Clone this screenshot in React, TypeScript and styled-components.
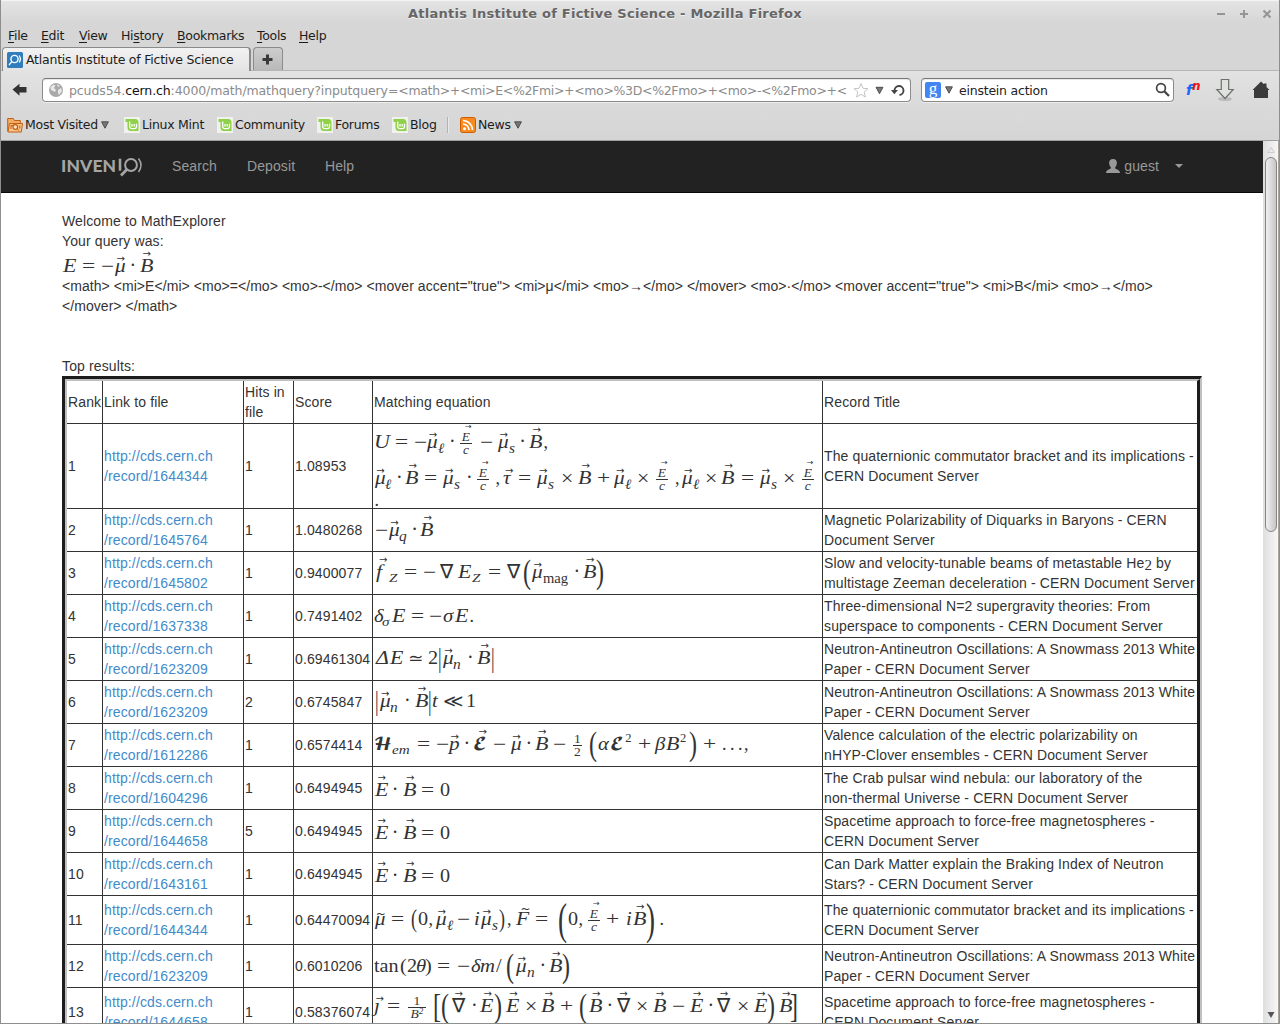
import React from "react";
import styled, { createGlobalStyle } from "styled-components";

const Global = createGlobalStyle`
  * { box-sizing: border-box; }
  body { margin: 0; background: #fff; overflow: hidden; }
`;

const ui = '"DejaVu Sans", sans-serif';
const sans = '"Liberation Sans", Arial, sans-serif';
const serif = '"Liberation Serif", "DejaVu Serif", serif';
const script = '"DejaVu Math TeX Gyre", "DejaVu Sans", serif';

/* ---------- window frame ---------- */

const Frame = styled.div`
  width: 1280px;
  height: 1024px;
  display: flex;
  flex-direction: column;
  overflow: hidden;
  border: 1px solid #8e8e8e;
  border-top: 0;
  background: #d6d6d6;
  font-family: ${ui};
  font-size: 12.5px;
  letter-spacing: -0.22px;
  color: #1c1c1c;
`;

const TitleBar = styled.header`
  height: 26px;
  flex: none;
  display: flex;
  align-items: center;
  justify-content: space-between;
  padding: 0 7px 0 407px;
  border-top: 1px solid #f4f4f4;
  background: linear-gradient(#e4e4e4, #d6d6d6 22px);
`;

const WindowTitle = styled.div`
  font-size: 13px;
  font-weight: bold;
  letter-spacing: 0.25px;
  color: #666;
  text-shadow: 0 1px 0 #f2f2f2;
  white-space: nowrap;
`;

const WindowButtons = styled.div`
  display: flex;
  gap: 13px;
`;

const MenuBar = styled.nav`
  height: 21px;
  flex: none;
  display: flex;
  align-items: center;
  padding: 0 0 2px 7px;
`;

const MenuItem = styled.span<{ $w: number }>`
  width: ${(p) => p.$w}px;
  white-space: nowrap;
  line-height: 18px;
  letter-spacing: -0.3px;
  u { text-underline-offset: 2px; text-decoration-thickness: 1px; }
`;

const TabStrip = styled.div`
  height: 24px;
  flex: none;
  display: flex;
  align-items: flex-end;
  gap: 2px;
  padding-left: 1px;
  border-bottom: 1px solid #b5b5b5;
`;

const Tab = styled.div`
  width: 249px;
  height: 24px;
  margin-bottom: -1px;
  display: flex;
  align-items: center;
  gap: 3px;
  padding: 0 4px;
  border: 1px solid #8b8b8b;
  border-width: 1px 2px 0 1px;
  border-radius: 4px 4px 0 0;
  background: linear-gradient(#f2f2f2, #e3e3e3);
  white-space: nowrap;
`;

const NewTab = styled.button`
  width: 30px;
  height: 23px;
  padding: 0 2px 0 0;
  display: flex;
  align-items: center;
  justify-content: center;
  border: 1px solid #8b8b8b;
  border-bottom: 0;
  border-radius: 4px 4px 0 0;
  background: linear-gradient(#cdcdcd, #b9b9b9);
`;

const NavBar = styled.div`
  height: 38px;
  flex: none;
  display: flex;
  align-items: center;
  padding-left: 11px;
  background: linear-gradient(#e2e2e2, #d9d9d9);
`;

const Field = styled.div<{ $w: number }>`
  width: ${(p) => p.$w}px;
  height: 24px;
  display: flex;
  align-items: center;
  border: 1px solid #8a8a8a;
  border-top-color: #777;
  border-radius: 4px;
  background: #fff;
  box-shadow: 0 1px 0 #eee, inset 0 1px 0 #e8e8e8;
`;

const UrlField = styled(Field)`
  margin-left: 14px;
  padding-left: 5px;
`;

const SearchField = styled(Field)`
  margin: 0 12px 0 10px;
  padding: 0 2px 0 3px;
`;

const Url = styled.div`
  flex: none;
  width: 778px;
  margin-left: 5px;
  overflow: hidden;
  white-space: nowrap;
  letter-spacing: -0.11px;
  color: #8b8b8b;
  b { font-weight: normal; color: #111; }
`;

const UrlQuery = styled.span`
  letter-spacing: -0.34px;
`;

const SearchText = styled.span`
  flex: 1;
  margin-left: 6px;
  color: #222;
`;

const GoogleMark = styled.span`
  width: 16px;
  height: 16px;
  border-radius: 2px;
  background: #4285f4;
  color: #fff;
  font: 17px/13px ${serif};
  text-align: center;
`;

const FnMark = styled.span`
  width: 16px;
  padding-bottom: 1px;
  color: #1a66ff;
  font: italic bold 14px/20px ${ui};
  white-space: nowrap;
  sup { color: #e11; font-size: 12px; line-height: 0; vertical-align: 5px; }
`;

const Bookmarks = styled.div`
  height: 32px;
  flex: none;
  display: flex;
  align-items: center;
  padding-left: 6px;
  border-bottom: 1px solid #a0a0a0;
  background: linear-gradient(#d9d9d9, #d5d5d5);
`;

const Bookmark = styled.span<{ $w: number }>`
  width: ${(p) => p.$w}px;
  display: flex;
  align-items: center;
  gap: 2px;
  white-space: nowrap;
  letter-spacing: -0.27px;
`;

const DropMark = styled.svg`
  margin-left: 1px;
`;

const Separator = styled.i`
  width: 2px;
  height: 16px;
  margin-right: 11px;
  border-left: 1px solid #b2b2b2;
  border-right: 1px solid #e8e8e8;
`;

/* ---------- page ---------- */

const Viewport = styled.div`
  flex: 1;
  min-height: 0;
  display: flex;
`;

const Page = styled.main`
  width: 1262px;
  overflow: hidden;
  background: #fff;
  font: 14px/20px ${sans};
  letter-spacing: 0;
  color: #333;
`;

const SiteBar = styled.nav`
  height: 52px;
  display: flex;
  align-items: center;
  padding: 0 80px 2px 61px;
  border-bottom: 1px solid #080808;
  background: #222;
  letter-spacing: 0.1px;
  color: #999;
`;

const Logo = styled.span`
  width: 110px;
  display: flex;
  align-items: center;
`;

const LogoText = styled.span`
  width: 56px;
  margin-left: -1px;
  padding-right: 1px;
  font: 900 17.5px/20px Lato, sans-serif;
  letter-spacing: 0.1px;
  color: #a5a5a5;
`;

const SiteLink = styled.span<{ $w: number }>`
  width: ${(p) => p.$w}px;
`;

const User = styled.span`
  margin-left: auto;
  display: flex;
  align-items: center;
  gap: 4px;
`;

const Caret = styled.i`
  margin-left: 12px;
  border: 4px solid transparent;
  border-top-color: #999;
  border-bottom: 0;
`;

const Content = styled.section`
  padding: 18px 0 0 61px;
  letter-spacing: 0.125px;
`;

const Line = styled.div`
  height: 20px;
  white-space: nowrap;
`;

const CodeLine = styled(Line)`
  letter-spacing: 0.055px;
`;

const QueryBox = styled.div`
  height: 25px;
  padding-top: 5px;
`;

const Results = styled.div`
  width: 1140px;
  border: 3px solid #1c1c1c;
  border-right: 2px solid #c0c0c0;
  border-bottom: 0;
`;

const ResultsInner = styled.div`
  border: 2px solid #c0c0c0;
  border-right: 3px solid #1c1c1c;
  border-bottom: 0;
`;

const Row = styled.div<{ $h: number }>`
  height: ${(p) => p.$h}px;
  display: grid;
  grid-template-columns: 36px 141px 50px 79px 450px 1fr;
  border-bottom: 1px solid #333;
`;

const Cell = styled.div<{ $end?: number }>`
  display: flex;
  align-items: center;
  padding: 0 0 ${(p) => p.$end || 1}px 1px;
  border-right: 1px solid #333;
  white-space: pre-line;
  &:last-child { border-right: 0; white-space: pre; }
`;

const Link = styled.a`
  color: #428bca;
  white-space: pre;
`;

const MathCell = styled.div<{ $pad: number }>`
  padding: ${(p) => p.$pad}px 0 0 1px;
  border-right: 1px solid #333;
`;

const HeSub = styled.span`
  font: 15px/0 ${serif};
  vertical-align: -2px;
`;

/* ---------- math ---------- */

const Formula = styled.div<{ $lead: number; $gap: number }>`
  height: 20px;
  display: flex;
  align-items: baseline;
  margin: ${(p) => p.$gap}px 0 0 ${(p) => p.$lead}px;
  font: 18px/20px ${serif};
  letter-spacing: 0;
  white-space: nowrap;
`;

const Token = styled.span<{ $w: number }>`
  position: relative;
  flex: none;
  width: ${(p) => p.$w}px;
`;

const Glyph = styled.span<{ $size: number; $sx: number; $sy: number; $shift: number; $italic: boolean; $font?: string }>`
  display: inline-block;
  line-height: 0;
  font-size: ${(p) => p.$size}px;
  font-style: ${(p) => (p.$italic ? "italic" : "normal")};
  font-family: ${(p) => p.$font || serif};
  vertical-align: ${(p) => p.$shift}px;
  transform: scale(${(p) => p.$sx}, ${(p) => p.$sy});
  transform-origin: left center;
`;

const Accent = styled.span<{ $x: number; $y: number; $size: number }>`
  position: absolute;
  left: ${(p) => p.$x}px;
  top: ${(p) => p.$y}px;
  font: ${(p) => p.$size}px/10px ${ui};
`;

const Fraction = styled.span<{ $w: number }>`
  position: relative;
  display: inline-flex;
  flex-direction: column;
  width: ${(p) => p.$w}px;
  margin-top: -6px;
  vertical-align: 7px;
  font-size: 13.5px;
  line-height: 12px;
  text-align: center;
`;

const Numerator = styled.span<{ $italic: boolean }>`
  border-bottom: 1px solid #333;
  font-style: ${(p) => (p.$italic ? "italic" : "normal")};
`;

const Denominator = styled.span<{ $italic: boolean }>`
  font-style: ${(p) => (p.$italic ? "italic" : "normal")};
  sup { font-size: 9px; line-height: 0; vertical-align: 4px; }
`;

type Style = { size?: number; sx?: number; sy?: number; shift?: number; italic?: boolean; font?: string };

/* Token kinds: one key per typographic role in a formula. */
const kinds: Record<string, Style> = {
  i: { italic: true, sx: 1.15 },
  I: { italic: true, sx: 1.22 },
  v: { italic: true, sx: 1.18 },
  V: { italic: true, sx: 1.22 },
  n: {},
  m: { sx: 1.12 },
  o: { sx: 1.3 },
  x: { sx: 1.22, sy: 1.2 },
  d: { size: 20 },
  N: { font: ui, size: 19, sx: 1.05, sy: 1.04 },
  W: { font: ui, size: 19, sx: 1.05, sy: 1.04 },
  R: { font: ui, size: 17, sx: 1.08 },
  L: { font: ui, size: 17.5, sx: 1.12 },
  h: { font: script, size: 17, sx: 1.0 },
  c: { font: script, size: 16, sx: 1.05 },
  C: { font: script, size: 16, sx: 1.05 },
  s: { italic: true, size: 14, shift: -5, sx: 1.1 },
  S: { italic: true, size: 13.5, shift: -4, sx: 1.12 },
  r: { size: 14, shift: -5, sx: 1.04 },
  p: { size: 12.5, shift: 8 },
  P: { size: 20, sx: 1.2, sy: 1.7 },
  Q: { size: 20, sx: 1.35, sy: 2.25 },
  q: { size: 20, sx: 0.9, sy: 1.3 },
  b: { size: 20, sx: 0.9, sy: 1.4 },
  t: { italic: true, sx: 1.15 },
  T: { italic: true, sx: 1.2 },
};

const arrows: Record<string, [number, number]> = {
  v: [1.5, -2.5],
  V: [3, -7],
  C: [6, -7.5],
  W: [2.5, -7],
};

const FractionView = ({ spec }: { spec: string }) => {
  if (spec === "E/c")
    return (
      <Fraction $w={12}>
        <Accent $x={5} $y={-9} $size={8}>→</Accent>
        <Numerator $italic>E</Numerator>
        <Denominator $italic>c</Denominator>
      </Fraction>
    );
  if (spec === "1/2")
    return (
      <Fraction $w={9}>
        <Numerator $italic={false}>1</Numerator>
        <Denominator $italic={false}>2</Denominator>
      </Fraction>
    );
  return (
    <Fraction $w={18}>
      <Numerator $italic={false}>1</Numerator>
      <Denominator $italic>B<sup>2</sup></Denominator>
    </Fraction>
  );
};

/* A formula is a list of "kind:glyph:x" items; x is the glyph's pen position. */
const MathLine = ({ src, origin = 374, gap = 0 }: { src: string; origin?: number; gap?: number }) => {
  const items = src.trim().split(/\s+/).map((t) => {
    const [k, g, x] = t.split(":");
    return { k, g, x: parseFloat(x) };
  });
  return (
    <Formula $lead={items[0].x - origin} $gap={gap}>
      {items.map((it, n) => {
        const w = n + 1 < items.length ? items[n + 1].x - it.x : 14;
        const st = kinds[it.k] || {};
        const arrow = arrows[it.k];
        return (
          <Token key={n} $w={w}>
            {it.k === "F" ? (
              <FractionView spec={it.g} />
            ) : (
              <Glyph
                $size={st.size || 18}
                $sx={st.sx || 1}
                $sy={st.sy || 1}
                $shift={st.shift || 0}
                $italic={!!st.italic}
                $font={st.font}
              >
                {it.g}
              </Glyph>
            )}
            {arrow && <Accent $x={arrow[0]} $y={arrow[1]} $size={10}>→</Accent>}
            {(it.k === "t" || it.k === "T") && (
              <Accent $x={it.k === "T" ? 4 : 1} $y={it.k === "T" ? -5 : 0} $size={12}>~</Accent>
            )}
          </Token>
        );
      })}
    </Formula>
  );
};

type Result = { id: string; hits: number; score: string; h?: number; end?: number; pad: number; math: [string, number?][]; title: React.ReactNode };

const EB = "V:E:374.5 d:·:391.7 V:B:403 o:=:421.2 m:0:439.7";

const results: Result[] = [
  {
    id: "1644344", hits: 1, score: "1.08953", h: 85, end: 2, pad: 8,
    math: [
      ["I:U:373.7 o:=:394.5 o:−:413.5 v:μ:427.3 s:ℓ:438 d:·:449 F:E/c:460 o:−:480 v:μ:498 s:s:508.7 d:·:519.3 V:B:529.5 n:,:543.5"],
      ["v:μ:374.7 s:ℓ:385.3 d:·:396 V:B:405.5 o:=:424.2 v:μ:443.5 s:s:454.3 d:·:466 F:E/c:477 n:,:495.5 v:τ:503.5 o:=:518.2 v:μ:537.5 s:s:548.5 x:×:561.5 V:B:578.5 o:+:597 v:μ:614.5 s:ℓ:625.3 x:×:637.5 F:E/c:656 n:,:675 v:μ:682.5 s:ℓ:693.5 x:×:704.7 V:B:721.5 o:=:741.2 v:μ:760 s:s:771.3 x:×:783.2 F:E/c:802", 16],
      ["n:.:374.5", 2],
    ],
    title: "The quaternionic commutator bracket and its implications -\nCERN Document Server",
  },
  {
    id: "1645764", hits: 1, score: "1.0480268", pad: 11,
    math: [["o:−:374.5 v:μ:388.7 s:q:399.3 d:·:411.3 V:B:420.5"]],
    title: "Magnetic Polarizability of Diquarks in Baryons - CERN\nDocument Server",
  },
  {
    id: "1645802", hits: 1, score: "0.9400077", pad: 10,
    math: [["V:f:376 S:Z:389 o:=:404 o:−:423 N:∇:440 I:E:458 S:Z:472 o:=:488.2 N:∇:507 P:(:523.5 v:μ:532 r:mag:543.3 d:·:573.5 V:B:583 P:):596.5"]],
    title: <span>Slow and velocity-tunable beams of metastable He<HeSub>2</HeSub> by{"\n"}multistage Zeeman deceleration - CERN Document Server</span>,
  },
  {
    id: "1637338", hits: 1, score: "0.7491402", pad: 11,
    math: [["i:δ:373.7 S:σ:382 I:E:391.5 o:=:410.5 o:−:429 i:σ:443 I:E:454.5 n:.:469.5"]],
    title: "Three-dimensional N=2 supergravity theories: From\nsuperspace to components - CERN Document Server",
  },
  {
    id: "1623209", hits: 1, score: "0.69461304", pad: 10,
    math: [["I:Δ:375.5 I:E:390.2 R:≃:408.5 m:2:428 b:|:438 v:μ:442.7 s:n:453.3 d:·:467 V:B:477.5 b:|:491"]],
    title: "Neutron-Antineutron Oscillations: A Snowmass 2013 White\nPaper - CERN Document Server",
  },
  {
    id: "1623209", hits: 2, score: "0.6745847", pad: 10,
    math: [["b:|:375 v:μ:379.5 s:n:390.3 d:·:404 V:B:414.7 b:|:427.7 i:t:432 L:≪:443.500 m:1:466.5"]],
    title: "Neutron-Antineutron Oscillations: A Snowmass 2013 White\nPaper - CERN Document Server",
  },
  {
    id: "1612286", hits: 1, score: "0.6574414", pad: 10,
    math: [["h:𝓗:373.5 S:em:392 o:=:416.5 o:−:435.5 v:p:449 d:·:463.5 C:𝓔:472.5 o:−:493 v:μ:510.7 d:·:525.5 V:B:535 o:−:553.3 F:1/2:573 P:(:589.5 i:α:598 c:𝓔:610.5 p:2:625.3 o:+:638 i:β:655.5 I:B:666.5 p:2:680 P:):689 o:+:703.5 n:.:722 n:.:730 n:.:738 n:,:744"]],
    title: "Valence calculation of the electric polarizability on\nnHYP-Clover ensembles - CERN Document Server",
  },
  {
    id: "1604296", hits: 1, score: "0.6494945", pad: 13, math: [[EB]],
    title: "The Crab pulsar wind nebula: our laboratory of the\nnon-thermal Universe - CERN Document Server",
  },
  {
    id: "1644658", hits: 5, score: "0.6494945", pad: 13, math: [[EB]],
    title: "Spacetime approach to force-free magnetospheres -\nCERN Document Server",
  },
  {
    id: "1643161", hits: 1, score: "0.6494945", pad: 13, math: [[EB]],
    title: "Can Dark Matter explain the Braking Index of Neutron\nStars? - CERN Document Server",
  },
  {
    id: "1644344", hits: 1, score: "0.64470094", h: 49, pad: 13,
    math: [["t:μ:374.7 o:=:391.2 q:(:411.5 m:0:417.7 n:,:428.5 v:μ:436 s:ℓ:446.7 o:−:457 i:i:474 v:μ:481 s:s:492 q:):499.5 n:,:507 T:F:516.5 o:=:535.2 Q:(:558 m:0:568.5 n:,:578.5 F:E/c:588 o:+:606.5 i:i:625.7 V:B:633 Q:):646 n:.:659.5"]],
    title: "The quaternionic commutator bracket and its implications -\nCERN Document Server",
  },
  {
    id: "1623209", hits: 1, score: "0.6010206", pad: 11,
    math: [["m:tan:374.3 m:(:400.5 m:2:407 i:θ:416 m:):425 o:=:437.2 o:−:457.3 i:δ:471 i:m:479.7 m:/:496 P:(:506 v:μ:516 s:n:526.7 d:·:539.5 V:B:549 P:):562.5"]],
    title: "Neutron-Antineutron Oscillations: A Snowmass 2013 White\nPaper - CERN Document Server",
  },
  {
    id: "1644658", hits: 1, score: "0.58376074", h: 49, pad: 8,
    math: [["v:ȷ:374 o:=:387.2 F:1/B:408 P:[:433 P:(:441 W:∇:452 d:·:471 V:E:480.5 P:):494.5 V:E:506.3 x:×:524.7 V:B:541.5 o:+:560 P:(:579 V:B:589 d:·:606.5 W:∇:616.7 x:×:636.5 V:B:652.7 o:−:672 V:E:689.7 d:·:707.5 W:∇:717.3 x:×:737 V:E:754 P:):767.5 V:B:779 P:]:790"]],
    title: "Spacetime approach to force-free magnetospheres -\nCERN Document Server",
  },
];

/* ---------- scrollbar ---------- */

const ScrollTrack = styled.aside`
  width: 16px;
  display: flex;
  flex-direction: column;
  align-items: center;
  justify-content: space-between;
  padding: 6px 0 4px 1px;
  border-right: 1px solid #a9a49b;
  background: linear-gradient(90deg, #dedede, #f7f7f7);
`;

const ScrollThumb = styled.div`
  width: 12px;
  height: 375px;
  margin-top: 4px;
  margin-bottom: auto;
  border: 1px solid #858585;
  border-radius: 6px;
  background: linear-gradient(90deg, #f0f0f0, #c6c6c6);
`;

/* ---------- icons ---------- */

const Triangle = () => (
  <DropMark width="8" height="8" viewBox="0 0 8 8"><path d="M.6 .8h6.8L4 7.2z" fill="#777" stroke="#444" strokeWidth=".9" /></DropMark>
);

const MintIcon = () => (
  <svg width="16" height="16" viewBox="0 0 16 16">
    <rect width="16" height="16" fill="#f1f1ee" />
    <path d="M1.500 2H11a3.500 3.500 0 0 1 3.500 3.500V14H7a3.500 3.500 0 0 1-3.500-3.500V5h-2z" fill="#8fd14a" />
    <path d="M5.700 4.500v5.300a1.800 1.800 0 0 0 1.800 1.800h3.200a1.800 1.800 0 0 0 1.800-1.800V6.700M8 9.500V7M10.200 9.500V7" fill="none" stroke="#fff" strokeWidth="1.300" />
  </svg>
);

const RssIcon = () => (
  <svg width="16" height="16" viewBox="0 0 16 16">
    <rect x=".5" y=".5" width="15" height="15" rx="2" fill="#f78b1f" stroke="#cf5c00" />
    <circle cx="4.500" cy="11.700" r="1.500" fill="#fff" />
    <path d="M3 7a6 6 0 0 1 6 6M3 3.500A9.500 9.500 0 0 1 12.500 13" fill="none" stroke="#fff" strokeWidth="1.700" />
  </svg>
);

const FolderIcon = () => (
  <svg width="16" height="16" viewBox="0 0 16 16">
    <path d="M.7 14.500V1.500h5.600l1 2h6v3" fill="#f2ad68" stroke="#c55e0e" />
    <path d="M1 15L2.500 6.500h13L14.300 15z" fill="#f7c48d" stroke="#c55e0e" />
    <circle cx="8.300" cy="10" r="2.300" fill="#ffe3c2" stroke="#c55e0e" strokeWidth="1.200" />
    <path d="M10 11.700l2.200 2M4 12V8.500h2M12.800 8.500v3" fill="none" stroke="#c55e0e" strokeWidth="1" />
  </svg>
);

const BackIcon = styled.svg`
  flex: none;
`;

const UrlTools = styled.svg`
  flex: none;
  margin-left: 6px;
`;

const ToolIcon = styled.svg<{ $gap: number }>`
  flex: none;
  margin-left: ${(p) => p.$gap}px;
`;

const menus: [string, string, string, number][] = [
  ["", "F", "ile", 33], ["", "E", "dit", 38], ["", "V", "iew", 42], ["Hi", "s", "tory", 56],
  ["", "B", "ookmarks", 80], ["", "T", "ools", 42], ["", "H", "elp", 40],
];

export default function App() {
  return (
    <Frame>
      <Global />
      <TitleBar>
        <WindowTitle>Atlantis Institute of Fictive Science - Mozilla Firefox</WindowTitle>
        <WindowButtons>
          <svg width="10" height="10" viewBox="0 0 10 10"><path d="M1 5h8" stroke="#959595" strokeWidth="2" /></svg>
          <svg width="10" height="10" viewBox="0 0 10 10"><path d="M1 5h8M5 1v8" stroke="#959595" strokeWidth="2" /></svg>
          <svg width="10" height="10" viewBox="0 0 10 10"><path d="M1.500 1.500l7 7M8.500 1.500l-7 7" stroke="#959595" strokeWidth="2" /></svg>
        </WindowButtons>
      </TitleBar>
      <MenuBar>
        {menus.map(([a, b, c, w]) => (
          <MenuItem key={b + c} $w={w}>{a}<u>{b}</u>{c}</MenuItem>
        ))}
      </MenuBar>
      <TabStrip>
        <Tab>
          <svg width="16" height="16" viewBox="0 0 16 16">
            <rect width="16" height="16" rx="1.500" fill="#2f7dbd" />
            <circle cx="7.500" cy="7" r="3.600" fill="none" stroke="#fff" strokeWidth="1.400" />
            <path d="M4.800 9.700L2 13M12.200 3.500q2.400 3.500 0 7" fill="none" stroke="#fff" strokeWidth="1.300" />
          </svg>
          Atlantis Institute of Fictive Science
        </Tab>
        <NewTab>
          <svg width="11" height="11" viewBox="0 0 11 11"><path d="M4 .5h3V4h3.500v3H7v3.500H4V7H.5V4H4z" fill="#3a3a3a" /></svg>
        </NewTab>
      </TabStrip>
      <NavBar>
        <BackIcon width="16" height="14" viewBox="0 0 16 14"><path d="M.5 6.500L7.500 .7V4H14.500v5.500H7.500v3.200z" fill="#333" /></BackIcon>
        <UrlField $w={869}>
          <svg width="16" height="16" viewBox="0 0 16 16">
            <circle cx="8" cy="8" r="7" fill="#a9a9a9" />
            <path d="M2.500 5l3-2.500 2 1L6 6l2 2-1 2-2-1-2-1zM10 8l3-2 1 3-3 4-1-2zM9 2l3 2-2 1z" fill="#e8e8e8" />
          </svg>
          <Url>pcuds54.<b>cern.ch</b>:4000/math/mathquery?inputquery=<UrlQuery>&lt;math&gt;+&lt;mi&gt;E&lt;%2Fmi&gt;+&lt;mo&gt;%3D&lt;%2Fmo&gt;+&lt;mo&gt;-&lt;%2Fmo&gt;+&lt;mover</UrlQuery></Url>
          <UrlTools width="56" height="17" viewBox="0 0 56 17">
            <path d="M8 1.500l2 4.800 5 .4-3.800 3.300 1.200 5L8 12.300 3.600 15l1.200-5L1 6.700l5-.4z" fill="#fff" stroke="#c4c4c4" />
            <path d="M23 5.300h7l-3.500 6.400z" fill="#777" stroke="#444" strokeWidth=".9" />
            <path d="M41.500 8.500a4.500 4.500 0 1 1 5 4.500" fill="none" stroke="#444" strokeWidth="1.900" />
            <path d="M38 8l3.300 4.300L45 8z" fill="#444" />
          </UrlTools>
        </UrlField>
        <SearchField $w={253}>
          <GoogleMark>g</GoogleMark>
          <ToolIcon $gap={4} width="8" height="8" viewBox="0 0 8 8"><path d="M.6 .8h6.800L4 7.200z" fill="#777" stroke="#444" strokeWidth=".9" /></ToolIcon>
          <SearchText>einstein action</SearchText>
          <svg width="16" height="16" viewBox="0 0 16 16"><circle cx="6" cy="6" r="4.400" fill="none" stroke="#444" strokeWidth="1.700" /><path d="M9.300 9.300l4.700 4.700" stroke="#444" strokeWidth="2.300" /></svg>
        </SearchField>
        <FnMark>f<sup>n</sup></FnMark>
        <ToolIcon $gap={13} width="20" height="24" viewBox="0 0 20 24">
          <ellipse cx="10" cy="21" rx="7" ry="2" fill="#bbb" />
          <path d="M6.300 1.500h7.400v10h4.500L10 20.500 1.800 11.500h4.500z" fill="#e0e2e0" stroke="#6d706c" strokeWidth="1.200" />
        </ToolIcon>
        <ToolIcon $gap={17} width="18" height="18" viewBox="0 0 18 18"><path d="M9 .5l3 2.800V2.500h2.500V6L17.500 9H16v8H2V9H.5z" fill="#3b3b3b" /></ToolIcon>
      </NavBar>
      <Bookmarks>
        <Bookmark $w={117}><FolderIcon />Most Visited <Triangle /></Bookmark>
        <Bookmark $w={93}><MintIcon />Linux Mint</Bookmark>
        <Bookmark $w={100}><MintIcon />Community</Bookmark>
        <Bookmark $w={75}><MintIcon />Forums</Bookmark>
        <Bookmark $w={55}><MintIcon />Blog</Bookmark>
        <Separator />
        <Bookmark $w={80}><RssIcon />News <Triangle /></Bookmark>
      </Bookmarks>
      <Viewport>
        <Page>
          <SiteBar>
            <Logo>
              <LogoText>INVEN</LogoText>
              <svg width="26" height="22" viewBox="0 0 26 22">
                <path d="M3 3.700v12" stroke="#a5a5a5" strokeWidth="2.600" />
                <circle cx="14" cy="10" r="5.900" fill="none" stroke="#a5a5a5" strokeWidth="2" />
                <path d="M9.800 14.500L4 20.500" stroke="#a5a5a5" strokeWidth="2.800" />
                <path d="M21.500 3.500q5 6.500 0 13.500" fill="none" stroke="#a5a5a5" strokeWidth="1.500" />
              </svg>
            </Logo>
            <SiteLink $w={75}>Search</SiteLink>
            <SiteLink $w={78}>Deposit</SiteLink>
            <SiteLink $w={40}>Help</SiteLink>
            <User>
              <svg width="14" height="14" viewBox="0 0 14 14"><path d="M7 0c2.800 0 4 1.700 3.900 4-.1 2-.9 3.300-1.700 4.200v1.300c1.600 1 4.800 1.400 4.800 4.500H0c0-3.100 3.200-3.500 4.800-4.500V8.200C4 7.300 3.200 6 3.100 4 3 1.700 4.200 0 7 0z" fill="#999" /></svg>
              guest
              <Caret />
            </User>
          </SiteBar>
          <Content>
            <Line>Welcome to MathExplorer</Line>
            <Line>Your query was:</Line>
            <QueryBox><MathLine origin={62} src="I:E:62.5 o:=:82 o:−:101 v:μ:115 d:·:129.500 V:B:139.5" /></QueryBox>
            <CodeLine>{'<math> <mi>E</mi> <mo>=</mo> <mo>-</mo> <mover accent="true"> <mi>μ</mi> <mo>→</mo> </mover> <mo>·</mo> <mover accent="true"> <mi>B</mi> <mo>→</mo>'}</CodeLine>
            <CodeLine>{"</mover> </math>"}</CodeLine>
            <Line />
            <Line />
            <Line>Top results:</Line>
            <Results>
              <ResultsInner>
                <Row $h={43}>
                  <Cell>Rank</Cell>
                  <Cell>Link to file</Cell>
                  <Cell>{"Hits in\nfile"}</Cell>
                  <Cell>Score</Cell>
                  <Cell>Matching equation</Cell>
                  <Cell>Record Title</Cell>
                </Row>
                {results.map((r, n) => (
                  <Row key={n} $h={r.h || 43}>
                    <Cell $end={r.end}>{n + 1}</Cell>
                    <Cell $end={r.end}><Link>{`http://cds.cern.ch\n/record/${r.id}`}</Link></Cell>
                    <Cell $end={r.end}>{r.hits}</Cell>
                    <Cell $end={r.end}>{r.score}</Cell>
                    <MathCell $pad={r.pad}>
                      {r.math.map(([src, gap], m) => <MathLine key={m} src={src} gap={gap} />)}
                    </MathCell>
                    <Cell $end={r.end}>{r.title}</Cell>
                  </Row>
                ))}
              </ResultsInner>
            </Results>
          </Content>
        </Page>
        <ScrollTrack>
          <svg width="8" height="6" viewBox="0 0 8 6"><path d="M.7 5.500h6.600L4 .5z" fill="none" stroke="#c4c4c4" strokeWidth=".8" /></svg>
          <ScrollThumb />
          <svg width="8" height="8" viewBox="0 0 8 8"><path d="M.5 1h7L4 7z" fill="#555" /></svg>
        </ScrollTrack>
      </Viewport>
    </Frame>
  );
}
